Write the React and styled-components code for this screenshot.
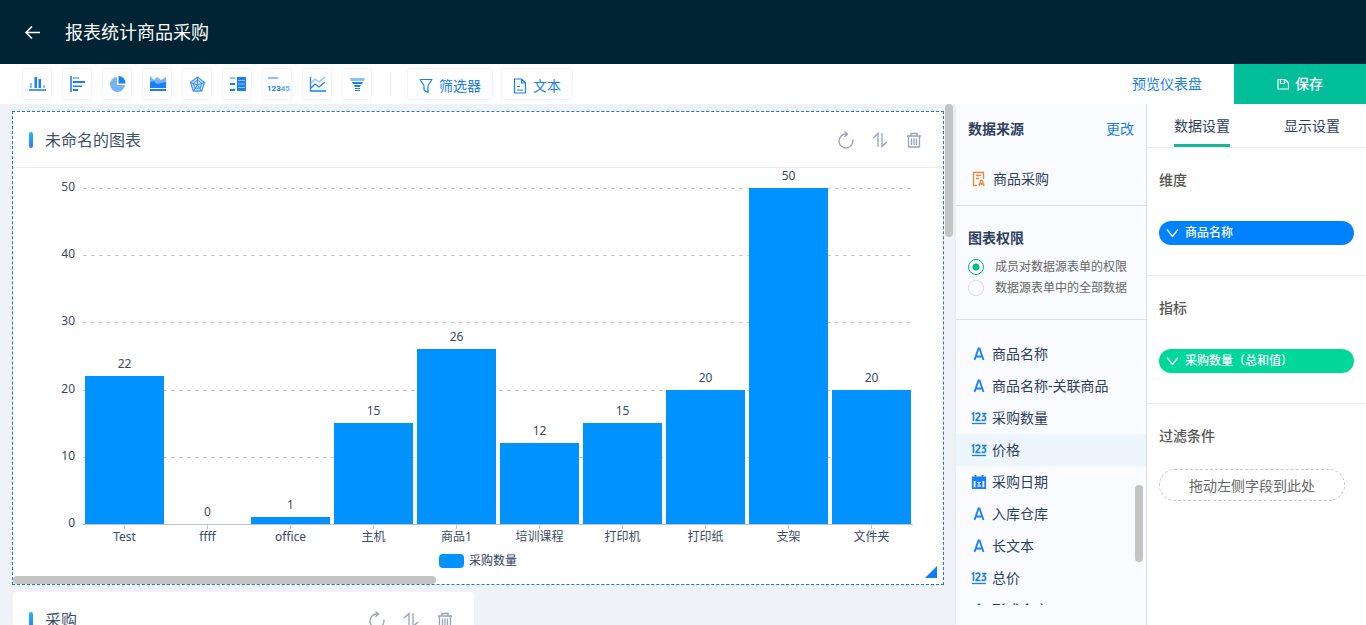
import React, { useState } from 'react';
import styled, { createGlobalStyle, css } from 'styled-components';

const Global = createGlobalStyle`
  *, *::before, *::after { box-sizing: border-box; }
  body {
    margin: 0;
    font-family: "Noto Sans", "Noto Sans CJK SC", sans-serif;
    font-size: 14px;
    line-height: 20px;
    color: #2e405e;
  }
  button { font: inherit; color: inherit; background: none; border: 0; padding: 0; cursor: pointer; }
  svg { display: block; overflow: visible; }
  h1, h2, h3, ul, fieldset { margin: 0; padding: 0; border: 0; }
`;

const Page = styled.div`
  display: flex;
  flex-direction: column;
  height: 100vh;
  overflow: hidden;
  background: #eff3f7;
`;

const Header = styled.header`
  flex: none;
  display: flex;
  align-items: center;
  gap: 24px;
  height: 64px;
  padding: 0 24px;
  background: #002433;
  color: #fff;
`;

const HeaderTitle = styled.h1`
  font-size: 18px;
  line-height: 24px;
  font-weight: 400;
`;

const Toolbar = styled.div`
  flex: none;
  display: flex;
  align-items: center;
  height: 40px;
  padding-left: 22px;
  background: #fff;
`;

const ToolGroup = styled.div`
  display: flex;
  gap: ${(p) => p.$gap}px;
`;

const ToolButton = styled.button`
  display: flex;
  align-items: center;
  justify-content: center;
  gap: 6px;
  height: 32px;
  width: ${(p) => (p.$labelled ? 'auto' : '30px')};
  padding: ${(p) => (p.$labelled ? '3px 11px 0' : '0')};
  border: 1px solid #f1f3f8;
  border-radius: 3px;
  color: #1a7ff0;
`;

const Divider = styled.div`
  width: 1px;
  height: 24px;
  margin: 0 16px 0 18px;
  background: #e9edf2;
`;

const PreviewLink = styled.a`
  margin-left: auto;
  margin-right: 32px;
  color: #1a7ff0;
  text-decoration: none;
`;

const SaveButton = styled.button`
  display: flex;
  align-items: center;
  justify-content: center;
  gap: 6px;
  align-self: stretch;
  width: 132px;
  background: #00be9a;
  color: #fff;
  font-weight: 500;
`;

const Workspace = styled.main`
  flex: 1;
  min-height: 0;
  display: flex;
`;

const Canvas = styled.section`
  flex: 1;
  min-width: 0;
  display: flex;
  gap: 1px;
  padding-right: 3px;
`;

const CardColumn = styled.div`
  flex: 1;
  min-width: 0;
  display: flex;
  flex-direction: column;
  gap: 6px;
  padding: 7px 0 0 12px;
`;

const Thumb = styled.div`
  border-radius: 4px;
  background: #c4c4c5;
  ${(p) => (p.$horizontal
    ? css`width: 45.5%; height: 8px;`
    : css`width: 8px; height: ${p.$length}px;`)}
`;

const FieldThumb = styled(Thumb)`
  position: absolute;
  right: 3px;
  top: 165px;
`;

const Card = styled.article`
  position: relative;
  flex: none;
  width: ${(p) => (p.$half ? 'calc(50% - 3px)' : '100%')};
  border: 1px ${(p) => (p.$selected ? 'dashed #1f78c8' : 'solid transparent')};
  border-radius: ${(p) => (p.$selected ? 0 : 4)}px;
  background: #fff;
  background-clip: padding-box;
`;

const CardHeader = styled.header`
  display: flex;
  align-items: center;
  height: 56px;
  padding: 0 20px 0 16px;
  border-bottom: 1px solid #e9ecef;
`;

const Accent = styled.span`
  width: 4px;
  height: 16px;
  margin-right: 12px;
  border-radius: 2px;
  background: linear-gradient(#22b8f0, #2a80f5);
`;

const CardTitle = styled.h2`
  flex: 1;
  font-size: 16px;
  line-height: 24px;
  font-weight: 400;
  color: #43506a;
`;

const CardActions = styled.div`
  display: flex;
  gap: 16px;
  color: #98a2b3;
`;

const ChartArea = styled.div`
  padding: 20px 30px 0 70px;
`;

const Plot = styled.svg`
  width: 100%;
  height: 366px;
  font-size: 12px;
  fill: #3c4a63;
`;

const Legend = styled.div`
  display: flex;
  align-items: center;
  justify-content: center;
  gap: 5px;
  height: 14px;
  margin-bottom: 8px;
  font-size: 12px;
  line-height: 14px;
`;

const Swatch = styled.span`
  width: 25px;
  height: 14px;
  border-radius: 4px;
  background: #0092ff;
`;

const ResizeHandle = styled.div`
  position: absolute;
  right: 6px;
  bottom: 6px;
  width: 12px;
  height: 12px;
  background: #0b7ffb;
  clip-path: polygon(100% 0, 100% 100%, 0 100%);
`;

const DataPanel = styled.aside`
  flex: none;
  width: 191px;
  display: flex;
  flex-direction: column;
  border-right: 1px solid #dcdfe8;
  background: #fafbfe;
  box-shadow: -1px 0 4px rgba(30, 60, 110, 0.06);
  clip-path: inset(0 0 0 -6px);
`;

const PanelBlock = styled.section`
  flex: none;
  padding: ${(p) => (p.$spacious ? 22 : 15)}px 12px 15px;
  border-bottom: 1px solid #dcdfe8;
`;

const PanelHeading = styled.div`
  display: flex;
  justify-content: space-between;
  margin-bottom: ${(p) => p.$space}px;
`;

const PanelTitle = styled.h3`
  font-size: 14px;
  line-height: 20px;
  font-weight: 700;
`;

const TextButton = styled.button`
  color: #1a7ff0;
`;

const Source = styled.div`
  display: flex;
  align-items: center;
  gap: 8px;
  padding-left: 4px;
  margin-bottom: 1px;
`;

const Options = styled.fieldset`
  padding-bottom: 6px;
`;

const Option = styled.label`
  display: flex;
  align-items: center;
  gap: 11px;
  height: 21px;
  font-size: 12px;
  color: #666;
  white-space: nowrap;
`;

const Radio = styled.input.attrs({ type: 'radio' })`
  appearance: none;
  flex: none;
  width: 16px;
  height: 16px;
  margin: 0;
  border: 1px solid #d4d9e0;
  border-radius: 50%;
  background: #fff;
  &:checked {
    border-color: #00b888;
    background: radial-gradient(circle, #00b888 3px, #fff 4px);
  }
`;

const FieldArea = styled.div`
  position: relative;
  flex: 1;
  min-height: 0;
  padding: 18px 0 20px;
`;

const FieldList = styled.ul`
  height: 100%;
  overflow: hidden;
  list-style: none;
`;

const Field = styled.li`
  display: flex;
  align-items: center;
  gap: 5px;
  height: 32px;
  padding-left: 15px;
  background: ${(p) => (p.$active ? '#edf6ff' : 'transparent')};
`;

const SettingsPanel = styled.aside`
  flex: none;
  width: 219px;
  background: #fff;
`;

const Tabs = styled.div`
  display: flex;
  justify-content: space-between;
  height: 44px;
  padding: 0 26px 0 27px;
  border-bottom: 1px solid #eef0f3;
`;

const Tab = styled.button`
  height: 43px;
  border-top: 3px solid transparent;
  border-bottom: 3px solid ${(p) => (p.$active ? '#14b896' : 'transparent')};
`;

const Setting = styled.section`
  height: 128px;
  padding: 22px 12px 0;
  border-bottom: 1px solid ${(p) => (p.$last ? 'transparent' : '#eff0f2')};
`;

const SettingTitle = styled.h3`
  font-size: 14px;
  line-height: 20px;
  font-weight: 500;
  color: #555;
`;

const Pill = styled.button`
  display: flex;
  align-items: center;
  gap: 6px;
  width: 100%;
  height: 24px;
  margin-top: 31px;
  padding-left: 7px;
  border-radius: 12px;
  background: ${(p) => p.$color};
  color: #fff;
  font-size: 12px;
  font-weight: 500;
`;

const DropZone = styled.div`
  height: 32px;
  margin: 23px 9px 0 0;
  border: 1px dashed #c8c8c8;
  border-radius: 16px;
  line-height: 32px;
  text-align: center;
  color: #666;
`;

/* Icons */

const Svg = ({ w = 20, h = w, children, ...rest }) => (
  <svg width={w} height={h} viewBox={`0 0 ${w} ${h}`} fill="none" aria-hidden="true" {...rest}>
    {children}
  </svg>
);

const DARK = '#1a80f5';
const LIGHT = '#8bc0fa';

const tools = [
  ['柱状图', <>
    <path d="M2 15h17v2H2z" fill="#4c9cf7" />
    <path d="M3 9h2v5H3zM7 3h1v11H7zM11 5h1v9h-1zM16 11h2v3h-2z" fill={LIGHT} />
    <path d="M8 3h2v11H8zM12 5h2v9h-2z" fill={DARK} />
  </>],
  ['条形图', <>
    <path d="M3 2h2v16H3z" fill="#4c9cf7" />
    <path d="M6 3h6v2H6zM6 11h9v1H6z" fill={LIGHT} />
    <path d="M6 7h12v2H6zM6 12h9v1H6zM6 15h5v2H6z" fill={DARK} />
  </>],
  ['饼图', <>
    <circle cx="10.500" cy="10.500" r="7.500" fill="#72b3fa" />
    <path d="M10 2h9v9h-9z" fill="#fff" />
    <path d="M11.500 2a7 7 0 0 1 7 7.500h-7z" fill={DARK} />
  </>],
  ['面积图', <>
    <path d="M3 2l4 4 3-3 4 3 5-3v9H3z" fill="#72b3fa" />
    <path d="M3 8l4-1 3 3 4-1 5-1v6H3zM3 15h16v2H3z" fill={DARK} />
  </>],
  ['雷达图', <>
    <path d="M10.500 3l7 5.500-2.800 8.500H6.300L3.500 8.500z" fill="#c5dffb" stroke="#4c9cf7" strokeWidth="1.300" />
    <path d="M10.500 6l4.200 3.200-1.600 5H7.900l-1.600-5zM10.500 3v8M3.500 8.500l7 2.500 7-2.500M6.500 17l4-6 4 6" stroke={DARK} strokeWidth="0.800" />
  </>],
  ['数据表', <>
    <path d="M3 4h5M3 10h5" stroke={LIGHT} strokeWidth="2" />
    <path d="M3 10h5M3 16h5" stroke={DARK} strokeWidth="2" />
    <path d="M10 3h9v14h-9z" fill={DARK} />
    <path d="M11 6.500h7M11 10h7M11 13.500h7" stroke="#8bc0fa" />
  </>],
  ['指标图', <>
    <path d="M1 4h10" stroke={LIGHT} strokeWidth="2" />
    <text x="0" y="17" fontSize="8" fontWeight="700" fontFamily="Roboto, sans-serif" fill={DARK}>123<tspan fill="#69aef9">45</tspan></text>
  </>],
  ['折线图', <>
    <path d="M3.500 3v14H19" stroke={DARK} strokeWidth="1.300" />
    <path d="M4 9l4-4 4 3 6-5" stroke={LIGHT} strokeWidth="1.300" />
    <path d="M4 14l4-4 4 3 6-5" stroke={DARK} strokeWidth="1.300" />
  </>],
  ['漏斗图', <>
    <path d="M3 4h15l-1 3H4z" fill={LIGHT} />
    <path d="M5 8h11l-1 2H6zM7 11h7l-1 2H8zM8 14h5v1H8zM8 16h5v1H8z" fill={DARK} />
  </>],
];

const BackIcon = () => (
  <Svg w={17} stroke="#fff" strokeWidth="1.600"><path d="M16 8.500H2M8 2.500l-6 6 6 6" /></Svg>
);
const FilterIcon = () => (
  <Svg w={14} h={16} stroke="currentColor" strokeWidth="1.200"><path d="M1 1.500h12L9 7.500v7l-4-2.500V7.500z" strokeLinejoin="round" /></Svg>
);
const DocIcon = () => (
  <Svg w={14} h={16} stroke="currentColor" strokeWidth="1.200"><path d="M1.500 1h7L12.500 5v10h-11zM8.500 1v4h4M4 8.500h3M4 12h6" strokeLinejoin="round" /></Svg>
);
const SaveIcon = () => (
  <Svg w={12} stroke="#fff" strokeWidth="1.200"><path d="M1 1.500h7L11.500 5v6H1zM3.500 1.500v4h4v-4" strokeLinejoin="round" /></Svg>
);
const RefreshIcon = () => (
  <Svg w={18} stroke="currentColor" strokeWidth="1.300"><path d="M15.800 8.500A7 7 0 1 1 9 3h1.500M7.500 0.500l3 2.500-3 2.800" /></Svg>
);
const SortIcon = () => (
  <Svg w={18} stroke="currentColor" strokeWidth="1.300"><path d="M2 7l5-4.500V16M11 2v13.500L16 11" /></Svg>
);
const TrashIcon = () => (
  <Svg w={18} stroke="currentColor" strokeWidth="1.300"><path d="M2 5h14M6 4.500V2.500h6v2M3.500 5v11h11V5M6.500 7.500V14M9 7.500V14M11.500 7.500V14" /></Svg>
);
const SourceIcon = () => (
  <Svg w={13} h={16} stroke="#ef8534" strokeWidth="1.300">
    <path d="M5 14.500H1.500v-13h10V8M4 4.500h5M4 7.500h3" />
    <path d="M7 15l.5-2h4l.5 2" /><circle cx="9.500" cy="11" r="1.500" />
  </Svg>
);
const ChevronIcon = () => (
  <Svg w={13} h={10} stroke="#fff" strokeWidth="1.300"><path d="M1 1.500L6.500 8.500 12 1.500" /></Svg>
);

const fieldIcons = {
  text: <path d="M3.500 14L7.500 2.500h1l4 11.500M5 10.500h6" stroke={DARK} strokeWidth="1.800" />,
  number: <>
    <path d="M1 4l1.500-1v8M5 4.500C5 2.500 8.800 2.600 8.800 5 8.800 7 5 9 5 10.500h4.500M11 3.500h3.500L12.500 6c3 0 2.800 4.500 0 4.500-1 0-1.500-.5-1.800-1" stroke={DARK} strokeWidth="1.600" />
    <path d="M1 13.500h14" stroke={DARK} strokeWidth="1.300" />
  </>,
  date: <>
    <path d="M1.800 3.500h12.400v10.700H1.800zM4.500 1v3M11.500 1v3" stroke={DARK} strokeWidth="1.800" />
    <path d="M2 4h12v3H2zM4.500 6h7v8h-7z" fill={DARK} />
    <path d="M6 8.500h4M6 12h4M8 8.500v3.500" stroke="#fff" />
  </>,
};

/* Data */

const bars = [
  ['Test', 22], ['ffff', 0], ['office', 1], ['主机', 15], ['商品1', 26],
  ['培训课程', 12], ['打印机', 15], ['打印纸', 20], ['支架', 50], ['文件夹', 20],
];

const fields = [
  ['text', '商品名称'], ['text', '商品名称-关联商品'], ['number', '采购数量'],
  ['number', '价格', true], ['date', '采购日期'], ['text', '入库仓库'],
  ['text', '长文本'], ['number', '总价'], ['text', '形成仓库'],
];

const PLOT_HEIGHT = 336;
const MAX = 50;
const toY = (v) => Math.round(PLOT_HEIGHT * (1 - v / MAX));

function BarChart() {
  const band = 100 / bars.length;
  return (
    <Plot role="img" aria-label="采购数量">
      {[0, 10, 20, 30, 40, 50].map((v) => (
        <g key={v}>
          <text x="-8" y={toY(v) + 3} textAnchor="end">{v}</text>
          <line x1="0" x2="100%" y1={toY(v) + 0.5} y2={toY(v) + 0.5}
            stroke={v ? '#ccc' : '#bcc4d0'} strokeDasharray={v ? '4 4' : undefined} />
        </g>
      ))}
      {bars.map(([name, value], i) => {
        const mid = `${(i + 0.5) * band}%`;
        return (
          <g key={name}>
            <rect x={`${i * band + band * 0.024}%`} width={`${band * 0.952}%`}
              y={toY(value)} height={PLOT_HEIGHT - toY(value)} fill="#0092ff" shapeRendering="crispEdges" />
            <line x1={mid} x2={mid} y1={PLOT_HEIGHT} y2={PLOT_HEIGHT + 5} stroke="#bcc4d0" />
            <text x={mid} y={toY(value) - 8} textAnchor="middle">{value}</text>
            <text x={mid} y={PLOT_HEIGHT + 17} textAnchor="middle">{name}</text>
          </g>
        );
      })}
    </Plot>
  );
}

function ChartHeader({ title }) {
  return (
    <CardHeader>
      <Accent />
      <CardTitle>{title}</CardTitle>
      <CardActions>
        <button aria-label="刷新"><RefreshIcon /></button>
        <button aria-label="排序"><SortIcon /></button>
        <button aria-label="删除"><TrashIcon /></button>
      </CardActions>
    </CardHeader>
  );
}

export default function App() {
  const [scope, setScope] = useState('member');
  return (
    <>
      <Global />
      <Page>
        <Header>
          <button aria-label="返回"><BackIcon /></button>
          <HeaderTitle>报表统计商品采购</HeaderTitle>
        </Header>
        <Toolbar>
          <ToolGroup $gap={10}>
            {tools.map(([label, icon]) => (
              <ToolButton key={label} aria-label={label}>
                <Svg w={20}>{icon}</Svg>
              </ToolButton>
            ))}
          </ToolGroup>
          <Divider />
          <ToolGroup $gap={8}>
            <ToolButton $labelled><FilterIcon />筛选器</ToolButton>
            <ToolButton $labelled><DocIcon />文本</ToolButton>
          </ToolGroup>
          <PreviewLink href="#preview">预览仪表盘</PreviewLink>
          <SaveButton><SaveIcon />保存</SaveButton>
        </Toolbar>
        <Workspace>
          <Canvas>
            <CardColumn>
              <Card $selected>
                <ChartHeader title="未命名的图表" />
                <ChartArea><BarChart /></ChartArea>
                <Legend><Swatch />采购数量</Legend>
                <Thumb $horizontal />
                <ResizeHandle />
              </Card>
              <Card $half>
                <ChartHeader title="采购" />
              </Card>
            </CardColumn>
            <Thumb $length={133} />
          </Canvas>
          <DataPanel>
            <PanelBlock>
              <PanelHeading $space={30}>
                <PanelTitle>数据来源</PanelTitle>
                <TextButton>更改</TextButton>
              </PanelHeading>
              <Source><SourceIcon />商品采购</Source>
            </PanelBlock>
            <PanelBlock $spacious>
              <PanelHeading $space={8}>
                <PanelTitle>图表权限</PanelTitle>
              </PanelHeading>
              <Options aria-label="图表权限">
                <Option>
                  <Radio name="scope" checked={scope === 'member'} onChange={() => setScope('member')} />
                  成员对数据源表单的权限
                </Option>
                <Option>
                  <Radio name="scope" checked={scope === 'all'} onChange={() => setScope('all')} />
                  数据源表单中的全部数据
                </Option>
              </Options>
            </PanelBlock>
            <FieldArea>
              <FieldList>
                {fields.map(([kind, name, active]) => (
                  <Field key={name} $active={active}>
                    <Svg w={16}>{fieldIcons[kind]}</Svg>
                    {name}
                  </Field>
                ))}
              </FieldList>
              <FieldThumb $length={77} />
            </FieldArea>
          </DataPanel>
          <SettingsPanel>
            <Tabs role="tablist">
              <Tab role="tab" aria-selected="true" $active>数据设置</Tab>
              <Tab role="tab" aria-selected="false">显示设置</Tab>
            </Tabs>
            <Setting>
              <SettingTitle>维度</SettingTitle>
              <Pill $color="#0082ff"><ChevronIcon />商品名称</Pill>
            </Setting>
            <Setting>
              <SettingTitle>指标</SettingTitle>
              <Pill $color="#00d89a"><ChevronIcon />采购数量（总和值）</Pill>
            </Setting>
            <Setting $last>
              <SettingTitle>过滤条件</SettingTitle>
              <DropZone>拖动左侧字段到此处</DropZone>
            </Setting>
          </SettingsPanel>
        </Workspace>
      </Page>
    </>
  );
}
